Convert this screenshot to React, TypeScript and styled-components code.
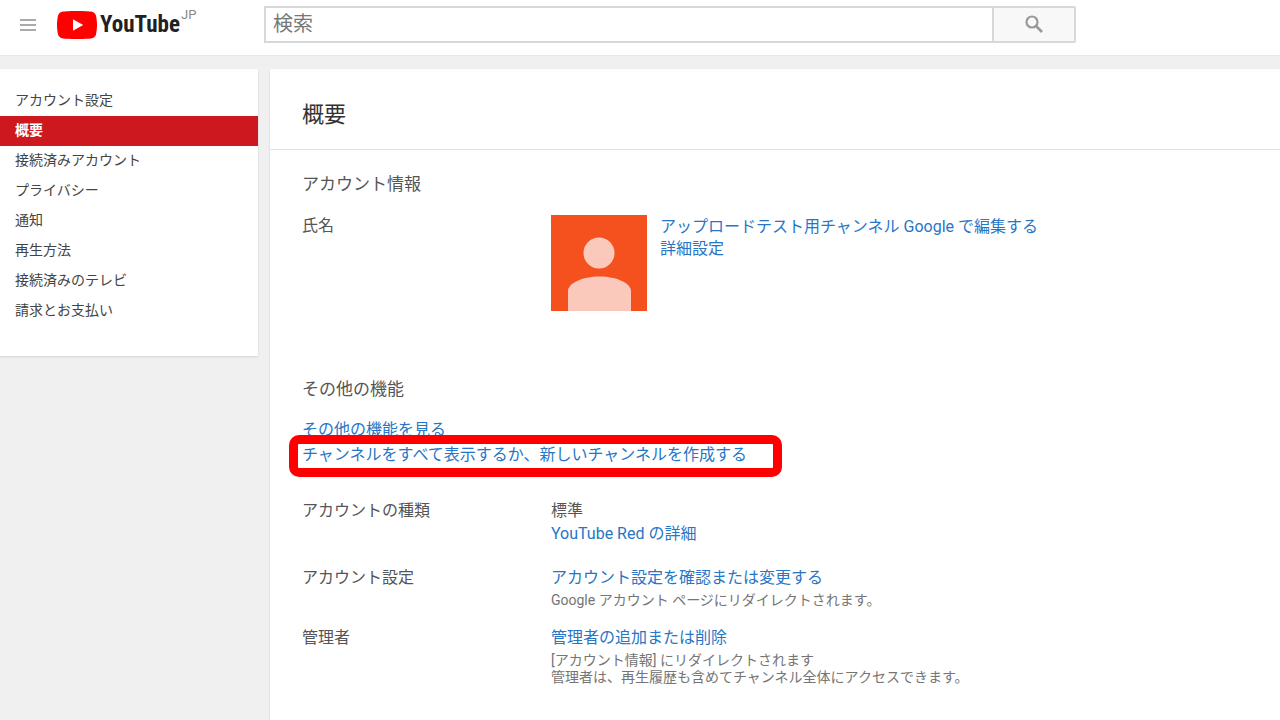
import React from "react";
import styled, { createGlobalStyle, css } from "styled-components";

const GlobalStyle = createGlobalStyle`
  *, *::before, *::after { box-sizing: border-box; }
  body {
    margin: 0;
    background: #f0f0f0;
    color: #555;
    font-family: Roboto, "Noto Sans CJK JP", sans-serif;
    font-size: 16px;
    line-height: 22px;
  }
  h1, h2, p, ul { margin: 0; padding: 0; }
`;

const Page = styled.div`
  display: flex;
  flex-direction: column;
  min-height: 100vh;
`;

const Header = styled.header`
  display: flex;
  align-items: flex-start;
  height: 56px;
  padding: 6px 16px 0 20px;
  background: #fff;
  border-bottom: 1px solid #e8e8e8;
`;

const Brand = styled.div`
  display: flex;
  align-items: center;
  flex: 0 0 244px;
  height: 38px;
`;

const MenuButton = styled.button`
  display: flex;
  margin: 0 21px 0 0;
  padding: 0;
  border: 0;
  background: none;
  cursor: pointer;
`;

const LogoLink = styled.a`
  display: flex;
  align-items: center;
  color: #212121;
  text-decoration: none;
`;

const LogoText = styled.span`
  margin-left: 3px;
  font: 700 23px/30px "Roboto Condensed", "Open Sans Condensed", Roboto, sans-serif;
`;

const Region = styled.span`
  align-self: flex-start;
  margin-left: 1px;
  color: #888;
  font-size: 13px;
  line-height: 10px;
`;

const SearchForm = styled.form`
  display: flex;
  flex: 1;
  max-width: 812px;
  height: 37px;
`;

const SearchInput = styled.input`
  flex: 1;
  min-width: 0;
  padding: 0 7px 2px;
  border: 2px solid #d8d8d8;
  border-right-width: 1px;
  background: #fff;
  font: inherit;
  font-size: 20px;
  outline: none;
  &::placeholder { color: #777; opacity: 1; }
`;

const SearchButton = styled.button`
  display: flex;
  align-items: center;
  justify-content: center;
  width: 83px;
  padding: 0 0 2px;
  border: 2px solid #d8d8d8;
  border-left-width: 1px;
  border-radius: 0 2px 2px 0;
  background: #f8f8f8;
  cursor: pointer;
`;

const Body = styled.div`
  display: flex;
  flex: 1;
  align-items: stretch;
  gap: 12px;
  padding-top: 13px;
`;

const panel = css`
  background: #fff;
  box-shadow: 0 1px 2px rgba(0, 0, 0, 0.12);
`;

const Sidebar = styled.nav`
  ${panel}
  flex: 0 0 258px;
  align-self: flex-start;
  padding: 17px 0 30px;
`;

const NavList = styled.ul`
  list-style: none;
`;

const NavLink = styled.a<{ $active?: boolean }>`
  display: block;
  padding: 0 15px 2px;
  color: ${(p) => (p.$active ? "#fff" : "#444")};
  background: ${(p) => (p.$active ? "#cc181e" : "transparent")};
  font-size: 14px;
  font-weight: ${(p) => (p.$active ? 700 : 400)};
  line-height: 28px;
  text-decoration: none;
`;

const Content = styled.main`
  ${panel}
  flex: 1;
  min-width: 0;
  padding-bottom: 30px;
`;

const TitleBar = styled.div`
  padding: 31px 32px 19px;
  border-bottom: 1px solid #e2e2e2;
`;

const Title = styled.h1`
  color: #333;
  font-size: 22px;
  font-weight: 400;
  line-height: 30px;
`;

const Section = styled.section<{ $top: number }>`
  padding: ${(p) => p.$top}px 32px 0;
`;

const SectionTitle = styled.h2`
  font-size: 17px;
  font-weight: 400;
  line-height: 24px;
`;

const Row = styled.div<{ $top: number }>`
  display: flex;
  margin-top: ${(p) => p.$top}px;
`;

const Label = styled.div`
  flex: 0 0 249px;
`;

const Value = styled.div`
  display: flex;
  flex-direction: column;
  align-items: flex-start;
  gap: 1px;
  min-width: 0;
`;

const Profile = styled.div`
  display: flex;
  gap: 13px;
`;

const Stack = styled.div`
  display: flex;
  flex-direction: column;
  align-items: flex-start;
`;

const ProfileLinks = styled(Stack)`
  padding-top: 1px;
`;

const FeatureLinks = styled(Stack)`
  gap: 3px;
  margin-top: 18px;
`;

const TextLink = styled.a`
  color: #2776c6;
  text-decoration: none;
`;

const HighlightedLink = styled(TextLink)`
  position: relative;
  &::after {
    content: "";
    position: absolute;
    inset: -9px -35px -11px -13px;
    border: 9px solid #f00;
    border-radius: 10px;
    pointer-events: none;
  }
`;

const Note = styled.p`
  margin-top: 2px;
  color: #757575;
  font-size: 14px;
  line-height: 17px;
`;

const MenuIcon = () => (
  <svg width="16" height="14" viewBox="0 0 16 14" aria-hidden="true">
    <path d="M0 2h16M0 7h16M0 12h16" stroke="#aaa" strokeWidth="2" />
  </svg>
);

const PlayMark = () => (
  <svg width="40" height="28" viewBox="0 0 40 28" aria-hidden="true">
    <path
      d="M20 0c5 0 12 .2 15 .8 2 .5 3.500 2 4 4 .6 2.600 1 6 1 9.200s-.4 6.600-1 9.200c-.5 2-2 3.500-4 4-3 .6-10 .8-15 .8s-12-.2-15-.8c-2-.5-3.500-2-4-4C.4 20.600 0 17.200 0 14s.4-6.600 1-9.200c.5-2 2-3.500 4-4C8 .2 15 0 20 0z"
      fill="#f00"
    />
    <path d="M16 8.200v11.600L26.200 14z" fill="#fff" />
  </svg>
);

const SearchIcon = () => (
  <svg width="18" height="18" viewBox="0 0 18 18" fill="none" stroke="#999" aria-hidden="true">
    <circle cx="7" cy="7" r="5.500" strokeWidth="2.200" />
    <path d="M11 11l6 6" strokeWidth="2.600" />
  </svg>
);

const Avatar = () => (
  <svg width="96" height="96" viewBox="0 0 96 96" role="img" aria-label="プロフィール写真">
    <path d="M0 0h96v96H0z" fill="#f4511e" />
    <circle cx="48" cy="38" r="15.500" fill="#fbc9bb" />
    <path d="M17 96V76c0-7.500 14-14.500 31.500-14.500S80 68.500 80 76v20z" fill="#fbc9bb" />
  </svg>
);

const navItems = [
  "アカウント設定",
  "概要",
  "接続済みアカウント",
  "プライバシー",
  "通知",
  "再生方法",
  "接続済みのテレビ",
  "請求とお支払い",
];

export default function App() {
  return (
    <Page lang="ja">
      <GlobalStyle />
      <Header>
        <Brand>
          <MenuButton type="button" aria-label="メニュー">
            <MenuIcon />
          </MenuButton>
          <LogoLink href="#">
            <PlayMark />
            <LogoText>YouTube</LogoText>
            <Region>JP</Region>
          </LogoLink>
        </Brand>
        <SearchForm role="search" onSubmit={(e) => e.preventDefault()}>
          <SearchInput type="text" placeholder="検索" aria-label="検索" />
          <SearchButton type="submit" aria-label="検索を実行">
            <SearchIcon />
          </SearchButton>
        </SearchForm>
      </Header>
      <Body>
        <Sidebar>
          <NavList>
            {navItems.map((item) => (
              <li key={item}>
                <NavLink href="#" $active={item === "概要"}>
                  {item}
                </NavLink>
              </li>
            ))}
          </NavList>
        </Sidebar>
        <Content>
          <TitleBar>
            <Title>概要</Title>
          </TitleBar>
          <Section $top={22}>
            <SectionTitle>アカウント情報</SectionTitle>
            <Row $top={19}>
              <Label>氏名</Label>
              <Profile>
                <Avatar />
                <ProfileLinks>
                  <span>
                    <TextLink href="#">アップロードテスト用チャンネル</TextLink>{" "}
                    <TextLink href="#">Google で編集する</TextLink>
                  </span>
                  <TextLink href="#">詳細設定</TextLink>
                </ProfileLinks>
              </Profile>
            </Row>
          </Section>
          <Section $top={66}>
            <SectionTitle>その他の機能</SectionTitle>
            <FeatureLinks>
              <TextLink href="#">その他の機能を見る</TextLink>
              <HighlightedLink href="#">
                チャンネルをすべて表示するか、新しいチャンネルを作成する
              </HighlightedLink>
            </FeatureLinks>
            <Row $top={34}>
              <Label>アカウントの種類</Label>
              <Value>
                <p>標準</p>
                <TextLink href="#">YouTube Red の詳細</TextLink>
              </Value>
            </Row>
            <Row $top={22}>
              <Label>アカウント設定</Label>
              <Value>
                <TextLink href="#">アカウント設定を確認または変更する</TextLink>
                <Note>Google アカウント ページにリダイレクトされます。</Note>
              </Value>
            </Row>
            <Row $top={18}>
              <Label>管理者</Label>
              <Value>
                <TextLink href="#">管理者の追加または削除</TextLink>
                <Note>
                  [アカウント情報] にリダイレクトされます
                  <br />
                  管理者は、再生履歴も含めてチャンネル全体にアクセスできます。
                </Note>
              </Value>
            </Row>
          </Section>
        </Content>
      </Body>
    </Page>
  );
}
